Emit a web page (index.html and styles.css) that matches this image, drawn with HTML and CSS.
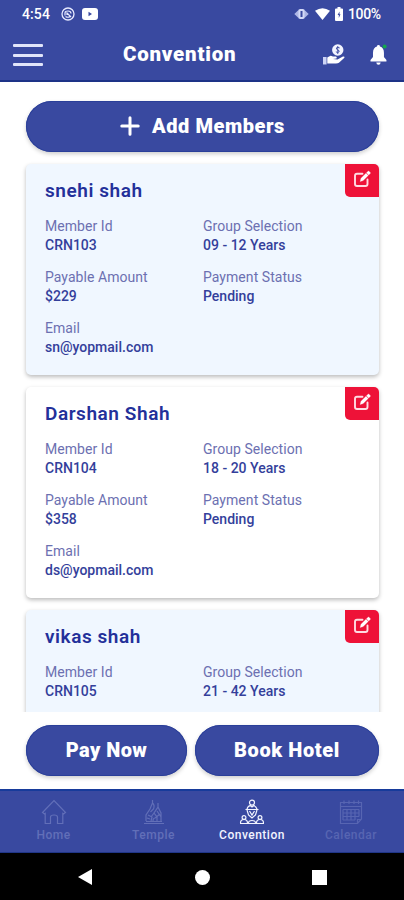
FILE: index.html
```html
<!DOCTYPE html>
<html lang="en">
<head>
<meta charset="utf-8">
<title>Convention</title>
<link rel="stylesheet" href="styles.css">
</head>
<body>
<svg class="defs" width="0" height="0">
  <symbol id="edit" viewBox="0 0 18 18"><path d="M9.500 3.700H4Q2 3.700 2 5.700V14Q2 16 4 16H12.500Q14.500 16 14.500 14V9.500" fill="none" stroke="#ffdbe2" stroke-width="1.900" stroke-linecap="round"/><path d="M7.200 11.500L8 8.300L13 3.300L15.200 5.500L10.200 10.500ZM13.500 2.800L15 1.300Q15.600 .8 16.200 1.400L17.200 2.400Q17.700 3 17.200 3.500L15.700 5Z" fill="#fff" stroke="#fff" stroke-width=".3"/></symbol>
</svg>
<div class="phone">
  <header class="top">
    <div class="status">
      <span class="clock">4:54</span>
      <svg class="s-app" width="14" height="14" viewBox="0 0 14 14" fill="none" stroke="#e7eaff"><circle cx="7" cy="7" r="6" stroke-width="1.300"/><path d="M4 8.500V6Q4 4 7 4T10 6.500M5.500 5.500L10 10M4.500 9.500Q7 11 9 9.500M6 8V6.500" stroke-width="1.200"/></svg>
      <svg class="s-tube" width="16" height="12" viewBox="0 0 16 12"><rect width="16" height="12" rx="3" fill="#fff"/><path d="M6.500 3.800V8.200L10 6Z" fill="#3949a0"/></svg>
      <span class="grow"></span>
      <svg class="s-vib" width="15" height="12" viewBox="0 0 15 12"><path d="M4.500 2L0.300 6L4.500 10ZM10.500 2L14.700 6L10.500 10Z" fill="#aeb7e6"/><rect x="4.200" y="1" width="6.600" height="10" rx="2" fill="#d3d9f7"/><rect x="6.500" y="3" width="2" height="6" fill="#3949a0"/></svg>
      <svg class="s-wifi" width="15" height="12" viewBox="0 0 15 12"><path d="M0 2.800Q7.500 -2.500 15 2.800L7.500 12Z" fill="#fff"/></svg>
      <svg class="s-bat" width="8" height="14" viewBox="0 0 8 14"><path d="M2.500 0H5.500V1.500H7Q8 1.500 8 2.500V13Q8 14 7 14H1Q0 14 0 13V2.500Q0 1.500 1 1.500H2.500Z" fill="#fff"/><path d="M4.500 4.500L2.600 8H3.800V11L5.500 7.200H4.500Z" fill="#3949a0"/></svg>
      <span class="pct">100%</span>
    </div>
    <div class="bar">
      <div class="menu"><i></i><i></i><i></i></div>
      <h1>Convention</h1>
      <svg class="hand" width="22" height="22" viewBox="0 0 22 22"><circle cx="14.800" cy="6" r="5.700" fill="#f2f4ff"/><path d="M16.800 4Q15 2.700 13.600 3.700Q12.800 5.300 14.800 5.900Q17 6.700 16 8Q14.500 9 12.900 7.800M14.800 2V10" fill="none" stroke="#3949a0" stroke-width=".9"/><path d="M0 13H3.600V20.500H0Z" fill="#cdd4f5"/><path d="M4.300 13.500L7.500 11.700Q8.500 11.600 10 12.600H13Q14.500 13.200 13.500 14.500L10 15L14.500 15.500L20 12.500Q22 12.200 21.500 13.800L16 18.800Q15 19.500 13 19.500H4.300Z" fill="#fff"/></svg>
      <svg class="bell" width="18" height="22" viewBox="0 0 18 22"><path d="M8.500 1Q10 1 10 2.500Q14 3.700 14 9V13L16.500 16V17.500H0.500V16L3 13V9Q3 3.700 7 2.500Q7 1 8.500 1ZM6.300 18.500H10.700Q10.500 20.700 8.500 20.700T6.300 18.500Z" fill="#fff"/><circle cx="14.700" cy="2.500" r="2" fill="#13a74e"/></svg>
    </div>
  </header>
  <main>
    <button class="pill add"><svg width="20" height="20" viewBox="0 0 20 20"><path d="M10 1.800V18.200M1.800 10H18.200" stroke="#fff" stroke-width="3" stroke-linecap="round"/></svg><span>Add Members</span></button>
    <section class="list">
      <article class="card tint">
        <div class="edit"><svg width="18" height="18"><use href="#edit"/></svg></div>
        <h2>snehi shah</h2>
        <dl><div><dt>Member Id</dt><dd>CRN103</dd></div><div><dt>Group Selection</dt><dd>09 - 12 Years</dd></div><div><dt>Payable Amount</dt><dd>$229</dd></div><div><dt>Payment Status</dt><dd>Pending</dd></div><div><dt>Email</dt><dd>sn@yopmail.com</dd></div></dl>
      </article>
      <article class="card">
        <div class="edit"><svg width="18" height="18"><use href="#edit"/></svg></div>
        <h2>Darshan Shah</h2>
        <dl><div><dt>Member Id</dt><dd>CRN104</dd></div><div><dt>Group Selection</dt><dd>18 - 20 Years</dd></div><div><dt>Payable Amount</dt><dd>$358</dd></div><div><dt>Payment Status</dt><dd>Pending</dd></div><div><dt>Email</dt><dd>ds@yopmail.com</dd></div></dl>
      </article>
      <article class="card tint">
        <div class="edit"><svg width="18" height="18"><use href="#edit"/></svg></div>
        <h2>vikas shah</h2>
        <dl><div><dt>Member Id</dt><dd>CRN105</dd></div><div><dt>Group Selection</dt><dd>21 - 42 Years</dd></div></dl>
      </article>
    </section>
    <div class="actions"><button class="pill pay">Pay Now</button><button class="pill book">Book Hotel</button></div>
  </main>
  <nav class="tabs">
    <a class="home"><svg width="26" height="26" viewBox="0 0 26 26"><path d="M1.500 13.500L13 1.500L24.500 13.500L22.500 15L21.800 14.500V24.500H16.500V18Q16.500 16 13 16T9.500 18V24.500H4.200V14.500L3.500 15Z"/></svg><span>Home</span></a>
    <a class="temple"><svg width="26" height="26" viewBox="0 0 26 26"><path d="M3 24.500H23M5 22.500H21M11.500 1V4L9 10L5 16V22M11.500 4Q14 6 12.500 10L9.500 13M17 4V8L13 14L16 18V22M17 8L20 14V22M7 16L11 18L10 22M6 19L9 20M13 14L10 18M14 19L19 15M16 12L20 18M12 22Q12 19 14 19"/></svg><span>Temple</span></a>
    <a class="convention on"><svg width="26" height="26" viewBox="0 0 26 26"><circle cx="13" cy="3.600" r="2.500"/><path d="M8 10Q9 7 11.500 6.700L13 8L14.500 6.700Q17 7 18 10M6.500 10.500H19.500M8 11L9.500 16L13 19L16.500 16L18 11M10.500 12L13 16L15.500 12M1 24.500H25M1.500 24Q1.500 20.500 5 20.500T8.500 24M9.500 24Q9.500 21.500 13 21.500T16.500 24M17.500 24Q17.500 20.500 21 20.500T24.500 24"/><circle cx="5" cy="18.500" r="1.900"/><circle cx="21" cy="18.500" r="1.900"/></svg><span>Convention</span></a>
    <a class="calendar"><svg width="26" height="26" viewBox="0 0 26 26"><path d="M2.500 3.500H23.500V20L19.500 24.500H2.500ZM2.500 7.500H23.500M19.500 24.500V20.500H23.500M6 1.500V5M11 1.500V5M16 1.500V5M20.500 1.500V5M5 10.500H21M5 14H21M5 17.500H21M5 21H17M5 10.500V21M9 10.500V21M13 10.500V21M17 10.500V21M21 10.500V17.500"/></svg><span>Calendar</span></a>
  </nav>
  <div class="system">
    <svg width="16" height="18" viewBox="0 0 16 18"><path d="M15 1V17L1 9Z" fill="#fff"/></svg>
    <i class="dot"></i><i class="square"></i>
  </div>
</div>
</body>
</html>
```
FILE: styles.css
```css
* { box-sizing: border-box; }
body { margin: 0; background: #fff; font-family: Roboto, "Liberation Sans", sans-serif; }
h1, h2, dl, dd { margin: 0; }
.defs { position: absolute; }
.phone { width: 404px; height: 900px; display: flex; flex-direction: column; overflow: hidden; }
.top { height: 82px; background: #3949a0; border-bottom: 2px solid #1d3387; color: #fff; }
.status { height: 28px; display: flex; align-items: center; padding: 0 23px 0 22px; font-size: 14px; font-weight: 500; }
.clock { width: 39px; letter-spacing: .1px; }
.s-tube { margin-left: 7px; }
.grow { flex: 1; }
.s-vib { margin-right: 1px; margin-left: -1px; }
.s-wifi { margin-left: 5px; }
.s-bat { margin-left: 5px; }
.pct { margin-left: 5px; width: 33px; white-space: nowrap; letter-spacing: -.35px; }
.bar { height: 52px; display: flex; align-items: center; padding: 0 16px 0 13px; }
.menu { width: 30px; height: 22px; display: flex; flex-direction: column; justify-content: space-between; margin-top: 2px; }
.menu i { height: 3px; background: #e1e5fa; border-radius: 1px; }
.bar h1 { margin-left: 80px; width: 201px; font-size: 20.5px; line-height: 24px; font-weight: 900; letter-spacing: .8px; }
.bell { margin: 2px 0 0 25px; }
.hand { margin-top: 1px; }
main { height: 707px; padding: 19px 25px 0 26px; display: flex; flex-direction: column; }
.pill { border: 0; padding: 0 0 2px; border-radius: 26px; height: 51px; background: #3949a0; color: #fff; font: 900 20px/24px Roboto, sans-serif; box-shadow: 0 2px 4px #0003, inset 0 0 0 1px #2a3f99; flex: none; white-space: nowrap; }
.add { display: flex; align-items: center; justify-content: center; gap: 12px; letter-spacing: .55px; }
.list { height: 560px; margin: 0 -5px; padding: 12px 5px 0; overflow: hidden; display: flex; flex-direction: column; gap: 12px; }
.card { position: relative; height: 211px; flex: none; padding: 15px 0 0 19px; background: #fff; border-radius: 5px; box-shadow: 0 2px 4px #0004; }
.tint { background: #f0f7ff; }
.card h2 { font-size: 19px; line-height: 24px; font-weight: 600; color: #23309a; letter-spacing: .56px; }
.edit { position: absolute; top: 0; right: 0; width: 34px; height: 33px; background: #ee1238; border-radius: 0 5px 0 5px; display: flex; align-items: center; justify-content: center; }
.edit svg { margin-bottom: 4px; }
dl { display: grid; grid-template-columns: 158px 1fr; row-gap: 13px; margin-top: 14px; font-size: 14px; line-height: 19px; }
dt { color: #6c70b1; letter-spacing: .05px; }
dd { color: #343f9b; font-weight: 500; letter-spacing: 0; }
.actions { display: flex; gap: 8px; margin-top: 13px; }
.pay { width: 161px; letter-spacing: .45px; }
.book { width: 184px; letter-spacing: .6px; }
.tabs { height: 64px; background: #3949a0; border-top: 2px solid #173b9b; border-bottom: 1px solid #203687; display: grid; grid-template-columns: 107px 93px 104px 94px; }
.tabs a { display: flex; flex-direction: column; align-items: center; padding-top: 8px; color: #626fb8; font-size: 12px; line-height: 14px; font-weight: 500; letter-spacing: .5px; }
.tabs svg { fill: none; stroke: currentColor; stroke-width: 1.2; margin-bottom: 3px; flex: none; }
.tabs .on { color: #f2f4ff; }
.tabs .calendar { color: #5765b2; }
.system { height: 47px; background: #000; display: flex; align-items: center; padding: 1px 0 0 77px; flex: none; }
.dot { width: 15px; height: 15px; border-radius: 50%; background: #fff; margin-left: 102px; }
.square { width: 15px; height: 15px; background: #fff; margin-left: 102px; }
```
